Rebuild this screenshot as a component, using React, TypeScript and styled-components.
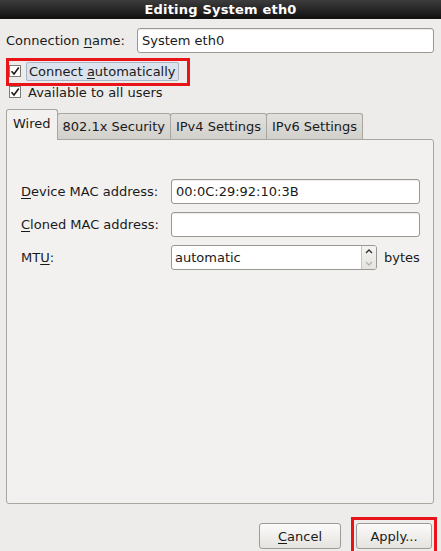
import React, { FC } from "react"
import styled, { createGlobalStyle } from "styled-components"

const GlobalStyle = createGlobalStyle`
    html, body {
        margin: 0;
        padding: 0;
        background: #edeceb;
    }
    body {
        font-family: "DejaVu Sans", "Liberation Sans", sans-serif;
        font-size: 13px;
        color: #1a1a1a;
    }
`

const Window = styled.div`
    width: 441px;
    height: 551px;
    display: flex;
    flex-direction: column;
    background: #edeceb;
    overflow: hidden;
`

const TitleBar = styled.div`
    height: 19px;
    flex: none;
    display: flex;
    align-items: center;
    justify-content: center;
    background: linear-gradient(#3c3c3c, #101010);
    color: #ffffff;
    font-weight: bold;
    font-size: 13px;
    letter-spacing: 0.2px;
`

const Body = styled.div`
    flex: 1;
    display: flex;
    flex-direction: column;
    padding: 9px 7px 2px 6px;
`

const NameRow = styled.div`
    display: flex;
    align-items: center;
    gap: 12px;
`

const Label = styled.span`
    white-space: nowrap;
    u {
        text-decoration: underline;
        text-underline-offset: 2px;
    }
`

const TextInput = styled.div`
    box-sizing: border-box;
    height: 25px;
    flex: 1;
    display: flex;
    align-items: center;
    padding: 0 4px;
    background: #ffffff;
    border: 1px solid #9a9893;
    border-radius: 3px;
    box-shadow: inset 0 1px 1px rgba(0, 0, 0, 0.08);
`

const CheckList = styled.div`
    display: flex;
    flex-direction: column;
    margin-top: 8px;
    gap: 1px;
`

// red annotation frame drawn over the highlighted control
const marked = (inset: string) => `
    position: relative;
    &::after {
        content: "";
        position: absolute;
        inset: ${inset};
        border: 3px solid #e8141a;
        pointer-events: none;
    }
`

const CheckRow = styled.div<{ highlight?: boolean }>`
    display: flex;
    align-items: center;
    height: 20px;
    width: fit-content;
    padding-left: 3px;
    ${(p) => p.highlight && marked("-3px -11px -5px 0")}
`

const Box = styled.span`
    box-sizing: border-box;
    width: 12px;
    height: 12px;
    border: 1px solid #7d7b77;
    background: #ffffff;
    display: flex;
    align-items: center;
    justify-content: center;
    margin-right: 5px;
`

const CheckText = styled.span<{ focused?: boolean }>`
    padding: 1px 2px;
    ${(p) =>
        p.focused &&
        `
        background: #dde3ec;
        border: 1px solid #a9b4c6;
        border-radius: 2px;
    `}
`

const TabStrip = styled.div`
    display: flex;
    align-items: flex-end;
    margin-top: 7px;
    height: 30px;
    position: relative;
    z-index: 1;
`

const Tab = styled.div<{ active?: boolean }>`
    box-sizing: border-box;
    display: flex;
    align-items: center;
    padding: 0 5px;
    border: 1px solid #a8a69f;
    border-bottom: none;
    border-radius: 3px 3px 0 0;
    ${(p) =>
        p.active
            ? `
        height: 31px;
        background: #f2f1f0;
        padding: 0 6px 4px 6px;
        margin-bottom: -1px;
    `
            : `
        height: 26px;
        background: linear-gradient(#e3e1dd, #d2d0cb);
        margin-left: -1px;
    `}
`

const Panel = styled.div`
    flex: 1;
    box-sizing: border-box;
    background: #f2f1f0;
    border: 1px solid #a8a69f;
    border-radius: 0 3px 3px 3px;
    padding: 39px 14px 0 14px;
`

const FieldGrid = styled.div`
    display: grid;
    grid-template-columns: 150px 1fr;
    row-gap: 8px;
    align-items: center;
`

const SpinRow = styled.div`
    display: flex;
    align-items: center;
    gap: 7px;
`

const Spin = styled.div`
    box-sizing: border-box;
    width: 206px;
    height: 25px;
    display: flex;
    background: #ffffff;
    border: 1px solid #9a9893;
    border-radius: 3px;
`

const SpinText = styled.div`
    flex: 1;
    display: flex;
    align-items: center;
    padding: 0 3px;
`

const SpinArrows = styled.div`
    width: 14px;
    border-left: 1px solid #c7c5c0;
    display: flex;
    flex-direction: column;
    background: linear-gradient(#f5f4f2, #e6e4e0);
    border-radius: 0 2px 2px 0;
`

const Arrow = styled.div<{ disabled?: boolean }>`
    flex: 1;
    display: flex;
    align-items: center;
    justify-content: center;
    color: ${(p) => (p.disabled ? "#b5b3ae" : "#2e2e2e")};
`

const ButtonRow = styled.div`
    display: flex;
    justify-content: flex-end;
    gap: 15px;
    margin-top: 19px;
    padding-right: 2px;
`

const Button = styled.div<{ width: number; highlight?: boolean }>`
    box-sizing: border-box;
    width: ${(p) => p.width}px;
    height: 26px;
    display: flex;
    align-items: center;
    justify-content: center;
    border: 1px solid #9d9b96;
    border-radius: 3px;
    background: linear-gradient(#fbfbfa, #e5e3df);
    ${(p) => p.highlight && marked("-7px -6px -6px -6px")}
    u {
        text-decoration: underline;
        text-underline-offset: 2px;
    }
`

const Check: FC = () => (
    <svg width="10" height="10" viewBox="0 0 10 10">
        <path d="M1.5 5.2 L4 8 L8.8 1.5" fill="none" stroke="#1a1a1a" strokeWidth="1.6" />
    </svg>
)

const Chevron: FC<{ up?: boolean }> = ({ up }) => (
    <svg width="8" height="5" viewBox="0 0 8 5">
        <path d={up ? "M1 4 L4 1 L7 4" : "M1 1 L4 4 L7 1"} fill="none" stroke="currentColor" strokeWidth="1.3" />
    </svg>
)

export default function App() {
    return (
        <Window>
            <GlobalStyle />
            <TitleBar>Editing System eth0</TitleBar>
            <Body>
                <NameRow>
                    <Label>
                        Connection <u>n</u>ame:
                    </Label>
                    <TextInput>System eth0</TextInput>
                </NameRow>
                <CheckList>
                    <CheckRow highlight>
                        <Box>
                            <Check />
                        </Box>
                        <CheckText focused>
                            Connect <Label><u>a</u></Label>utomatically
                        </CheckText>
                    </CheckRow>
                    <CheckRow>
                        <Box>
                            <Check />
                        </Box>
                        <CheckText>Available to all users</CheckText>
                    </CheckRow>
                </CheckList>
                <TabStrip>
                    <Tab active>Wired</Tab>
                    <Tab>802.1x Security</Tab>
                    <Tab>IPv4 Settings</Tab>
                    <Tab>IPv6 Settings</Tab>
                </TabStrip>
                <Panel>
                    <FieldGrid>
                        <Label>
                            <u>D</u>evice MAC address:
                        </Label>
                        <TextInput>00:0C:29:92:10:3B</TextInput>
                        <Label>
                            <u>C</u>loned MAC address:
                        </Label>
                        <TextInput />
                        <Label>
                            MT<u>U</u>:
                        </Label>
                        <SpinRow>
                            <Spin>
                                <SpinText>automatic</SpinText>
                                <SpinArrows>
                                    <Arrow>
                                        <Chevron up />
                                    </Arrow>
                                    <Arrow disabled>
                                        <Chevron />
                                    </Arrow>
                                </SpinArrows>
                            </Spin>
                            <span>bytes</span>
                        </SpinRow>
                    </FieldGrid>
                </Panel>
                <ButtonRow>
                    <Button width={82}>
                        <span>
                            <u>C</u>ancel
                        </span>
                    </Button>
                    <Button width={76} highlight>
                        Apply...
                    </Button>
                </ButtonRow>
            </Body>
        </Window>
    )
}
